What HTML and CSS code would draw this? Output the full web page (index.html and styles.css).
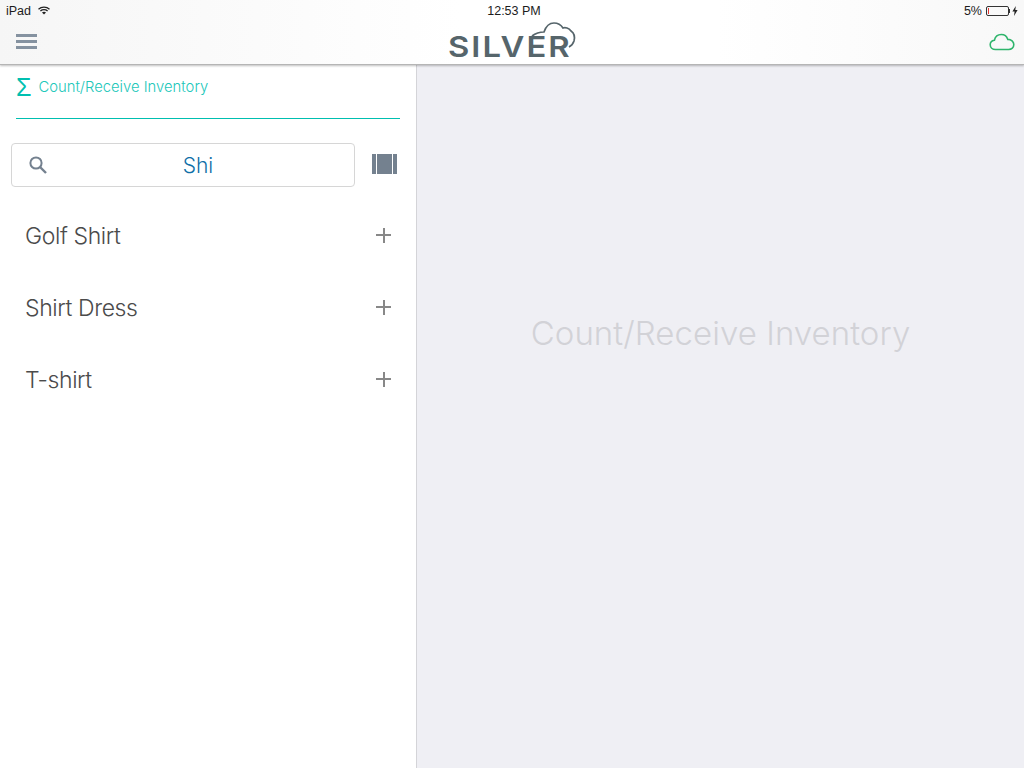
FILE: index.html
```html
<!DOCTYPE html>
<html lang="en">
<head>
    <meta charset="utf-8" />
    <title>Count/Receive Inventory</title>
    <link rel="stylesheet" href="styles.css">
</head>
<body>
    <header class="top-bar">
        <div class="status-bar">
            <div class="status-left">
                <span>iPad</span>
                <svg class="wifi-icon" viewBox="0 0 12 9" width="12" height="9">
                    <path d="M0.5 3.2C3.5 0.4 8.5 0.4 11.5 3.2" fill="none" stroke="#222" stroke-width="1.3"/>
                    <path d="M2.4 5C4.4 3.3 7.6 3.3 9.6 5" fill="none" stroke="#222" stroke-width="1.3"/>
                    <path d="M4 6.5C5.2 5.6 6.8 5.6 8 6.5L6 8.6Z" fill="#222"/>
                </svg>
            </div>
            <div class="status-time">12:53 PM</div>
            <div class="status-right">
                <span class="battery-text">5%</span>
                <span class="battery"><span class="battery-level"></span></span>
                <span class="battery-tip"></span>
                <svg class="bolt-icon" viewBox="0 0 6 10" width="6" height="10">
                    <path d="M3.8 0L0.4 5.6H2.6L2 10L5.6 4H3.3Z" fill="#222"/>
                </svg>
            </div>
        </div>
        <div class="nav-bar">
            <div class="menu-icon">
                <span></span>
                <span></span>
                <span></span>
            </div>
            <div class="logo">
                <span class="logo-text">SILVER</span>
                <svg class="logo-cloud" viewBox="0 0 50 28" width="50" height="28">
                    <path d="M4 16C8 13 12 12 16 12C18 6 22 3 26 3C30 3 33 5 35 8C37 7 41 8 43 11C46 13 47 17 46 21C45 24 43 26 41 27" fill="none" stroke="#56656b" stroke-width="1.7"/>
                </svg>
            </div>
            <svg class="cloud-icon" viewBox="0 0 26 18" width="26" height="18">
                <path d="M6.5 16.5C3.4 16.5 1.2 14.4 1.2 11.8C1.2 9.4 3 7.5 5.4 7.2C6.2 3.8 9 1.5 12.3 1.5C15.4 1.5 17.9 3.6 18.8 6.4C22.2 6.3 24.8 8.6 24.8 11.6C24.8 14.4 22.6 16.5 19.6 16.5Z" fill="none" stroke="#2fb56c" stroke-width="1.6"/>
            </svg>
        </div>
    </header>

    <main class="content">
        <section class="sidebar">
            <div class="section-title">
                <span class="sigma">&Sigma;</span>
                <span>Count/Receive Inventory</span>
            </div>
            <div class="search-row">
                <div class="search-box">
                    <svg class="search-icon" viewBox="0 0 20 20" width="20" height="20">
                        <circle cx="8" cy="8" r="5.6" fill="none" stroke="#74818f" stroke-width="2"/>
                        <path d="M12 12L18 18" stroke="#74818f" stroke-width="2.4"/>
                    </svg>
                    <span class="search-text">Shi</span>
                </div>
                <div class="barcode-icon">
                    <span class="bar-s"></span>
                    <span class="bar-l"></span>
                    <span class="bar-s"></span>
                </div>
            </div>
            <ul class="item-list">
                <li class="item"><span>Golf Shirt</span><span class="plus"></span></li>
                <li class="item"><span>Shirt Dress</span><span class="plus"></span></li>
                <li class="item"><span>T-shirt</span><span class="plus"></span></li>
            </ul>
        </section>
        <section class="detail">
            <div class="detail-title">Count/Receive Inventory</div>
        </section>
    </main>
</body>
</html>
```
FILE: styles.css
```css
* {
    margin: 0;
    padding: 0;
    box-sizing: border-box;
}

html, body {
    height: 100%;
    overflow: hidden;
}

body {
    width: 1024px;
    height: 768px;
    display: flex;
    flex-direction: column;
    font-family: 'Inter', 'Liberation Sans', sans-serif;
    font-weight: 300;
    background: white;
}

.top-bar {
    height: 65px;
    background: linear-gradient(90deg, #f6f6f6 0%, #ffffff 45%, #ffffff 70%, #f8f8f8 100%);
    border-bottom: 1px solid #b5b5b5;
    box-shadow: 0 1px 2px rgba(0, 0, 0, 0.25);
    position: relative;
    z-index: 1;
}

.status-bar {
    height: 21px;
    padding: 0 6px;
    display: grid;
    grid-template-columns: 1fr auto 1fr;
    align-items: center;
    font-family: 'Liberation Sans', sans-serif;
    font-weight: 400;
    font-size: 12.5px;
    color: #1c1c1c;
}

.status-left {
    display: flex;
    align-items: center;
    gap: 7px;
}

.status-time {
    padding-left: 4px;
}

.status-right {
    display: flex;
    align-items: center;
    justify-content: flex-end;
    gap: 2px;
}

.battery-text {
    margin-right: 2px;
}

.battery {
    width: 23px;
    height: 10px;
    border: 1px solid #333;
    border-radius: 2px;
    padding: 1px;
    display: block;
}

.battery-level {
    display: block;
    width: 1px;
    height: 100%;
    background: #e2332f;
}

.battery-tip {
    width: 1px;
    height: 4px;
    background: #333;
    margin-left: -2px;
}

.nav-bar {
    height: 43px;
    padding: 0 9px 0 16px;
    display: flex;
    align-items: center;
    justify-content: space-between;
    position: relative;
}

.menu-icon {
    width: 21px;
    display: flex;
    flex-direction: column;
    gap: 3px;
    margin-top: -3px;
}

.menu-icon span {
    height: 3px;
    background: #8592a0;
}

.logo {
    position: absolute;
    left: 448px;
    top: 0;
    width: 130px;
    height: 40px;
}

.logo-text {
    position: absolute;
    left: 0;
    top: 11px;
    font-weight: 600;
    font-size: 29px;
    line-height: 30px;
    letter-spacing: 1.8px;
    color: #56656b;
    transform: scaleX(1.13);
    transform-origin: left center;
}

.logo-cloud {
    position: absolute;
    left: 80px;
    top: -1px;
}

.cloud-icon {
    margin-top: -1px;
}

.content {
    flex: 1;
    display: flex;
    min-height: 0;
}

.sidebar {
    width: 417px;
    border-right: 1px solid #d4d4d8;
    background: white;
}

.section-title {
    height: 54px;
    margin: 0 16px;
    padding-top: 12px;
    display: flex;
    align-items: flex-start;
    gap: 7px;
    border-bottom: 1px solid #00bfb0;
    font-size: 14.8px;
    line-height: 20px;
    color: #21c7ba;
}

.sigma {
    font-family: 'Liberation Sans', sans-serif;
    font-weight: 400;
    font-size: 25px;
    line-height: 20px;
    color: #00bfb0;
}

.search-row {
    margin-top: 24px;
    padding: 0 19px 0 11px;
    display: flex;
    align-items: flex-start;
    justify-content: space-between;
}

.search-box {
    width: 344px;
    height: 44px;
    padding-left: 30px;
    border: 1px solid #d6d6d6;
    border-radius: 4px;
    display: flex;
    align-items: center;
    justify-content: center;
    position: relative;
    font-size: 21px;
    color: #0f6fa8;
}

.search-icon {
    position: absolute;
    left: 16px;
    top: 11px;
}

.barcode-icon {
    margin-top: 11px;
    width: 25px;
    height: 20px;
    display: flex;
    gap: 1px;
}

.bar-s {
    width: 4px;
    background: #74818f;
}

.bar-l {
    flex: 1;
    background: #74818f;
}

.item-list {
    list-style: none;
    margin-top: 13px;
}

.item {
    height: 72px;
    padding: 0 25px;
    display: flex;
    align-items: center;
    justify-content: space-between;
    font-size: 23px;
    letter-spacing: -0.4px;
    color: #4b4b4b;
}

.plus {
    width: 15px;
    height: 15px;
    margin-top: -2px;
    background: linear-gradient(#888, #888) center / 15px 2px no-repeat,
        linear-gradient(#888, #888) center / 2px 15px no-repeat;
}

.detail {
    flex: 1;
    background: #efeff4;
    display: flex;
    justify-content: center;
    padding-top: 246px;
}

.detail-title {
    font-size: 33px;
    line-height: 44px;
    letter-spacing: 0.05px;
    color: #d2d2d7;
}
```
